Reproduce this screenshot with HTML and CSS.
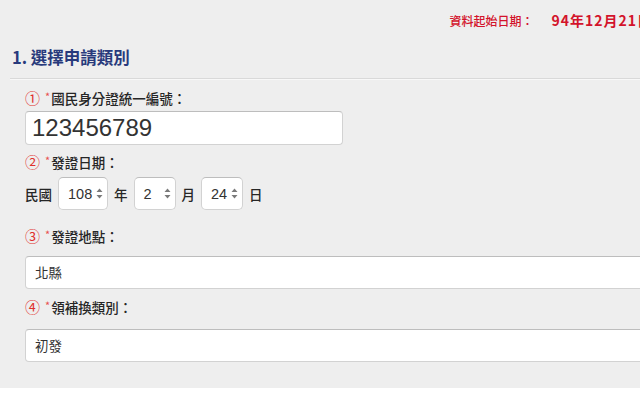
FILE: index.html
```html
<!DOCTYPE html>
<html lang="zh-Hant">
<head>
<meta charset="utf-8">
<title>選擇申請類別</title>
<link rel="stylesheet" href="styles.css">
</head>
<body>
<div class="page">
  <div class="topbar"><span class="since-label">資料起始日期：</span><span class="since-date">94年12月21日</span></div>
  <div class="section">
    <h2 class="section-title">1. 選擇申請類別</h2>
    <div class="fields">
      <div class="label label-first"><span class="num">①</span><span class="req">*</span>國民身分證統一編號：</div>
      <div class="textbox textbox-id">123456789</div>

      <div class="label label-date"><span class="num">②</span><span class="req">*</span>發證日期：</div>
      <div class="date-row">
        <span class="unit">民國</span>
        <div class="spin spin-year"><span class="spin-val">108</span><svg class="spin-arrow" width="7" height="11" viewBox="0 0 7 11"><path d="M3.5 0.5 L6.5 4 H0.5 Z M3.5 10.5 L6.5 7 H0.5 Z" fill="#7a7a7a"/></svg></div>
        <span class="unit">年</span>
        <div class="spin"><span class="spin-val">2</span><svg class="spin-arrow" width="7" height="11" viewBox="0 0 7 11"><path d="M3.5 0.5 L6.5 4 H0.5 Z M3.5 10.5 L6.5 7 H0.5 Z" fill="#7a7a7a"/></svg></div>
        <span class="unit">月</span>
        <div class="spin"><span class="spin-val">24</span><svg class="spin-arrow" width="7" height="11" viewBox="0 0 7 11"><path d="M3.5 0.5 L6.5 4 H0.5 Z M3.5 10.5 L6.5 7 H0.5 Z" fill="#7a7a7a"/></svg></div>
        <span class="unit">日</span>
      </div>

      <div class="label label-place"><span class="num">③</span><span class="req">*</span>發證地點：</div>
      <div class="selectbox selectbox-place">北縣</div>

      <div class="label label-type"><span class="num">④</span><span class="req">*</span>領補換類別：</div>
      <div class="selectbox selectbox-type">初發</div>
    </div>
  </div>
</div>
</body>
</html>
```
FILE: styles.css
```css
html, body {
  margin: 0;
  padding: 0;
  background: #ffffff;
  overflow: hidden;
}
body {
  font-family: "Noto Sans CJK TC", "Liberation Sans", sans-serif;
  color: #2a2a2a;
}
.page {
  width: 690px;
  background: #eeeeee;
  padding-bottom: 26px;
}
.topbar {
  height: 40px;
  line-height: 40px;
  text-align: right;
  padding-right: 38px;
  font-size: 12px;
  color: #d3132b;
  white-space: nowrap;
}
.since-label {
  font-weight: 500;
  margin-right: 18px;
}
.since-date {
  font-size: 14px;
  font-weight: 700;
  letter-spacing: 1px;
}
.section {
  margin-left: 10px;
}
.section-title {
  margin: 5px 0 0 0;
  padding: 0 0 9px 2px;
  font-size: 16.5px;
  line-height: 24px;
  font-weight: 700;
  color: #283a7c;
  border-bottom: 1px solid #d9d9d9;
  box-shadow: 0 1px 0 #f8f8f8;
}
.fields {
  padding-left: 15px;
  display: flex;
  flex-direction: column;
  align-items: flex-start;
}
.label {
  font-size: 13.5px;
  line-height: 20px;
  font-weight: 500;
  color: #262626;
  display: flex;
  align-items: center;
}
.num {
  color: #e0302c;
  font-size: 15px;
  font-weight: 400;
  width: 15px;
  margin-right: 5px;
}
.req {
  color: #e85050;
  font-size: 11px;
  line-height: 11px;
  font-weight: 400;
  align-self: flex-start;
  margin-top: 3px;
  margin-right: 1px;
}
.label-first { margin-top: 9px; }
.label-date { margin-top: 7px; }
.label-place { margin-top: 16px; }
.label-type { margin-top: 8px; }

.textbox,
.selectbox,
.spin {
  box-sizing: border-box;
  background: #ffffff;
  border: 1px solid #d2d2d2;
  border-top-color: #bdbdbd;
  border-radius: 4px;
}
.textbox-id {
  margin-top: 3px;
  width: 318px;
  height: 34px;
  line-height: 32px;
  padding-left: 6px;
  font-family: "Liberation Sans", sans-serif;
  font-size: 24px;
  color: #333333;
}
.date-row {
  margin-top: 5px;
  display: flex;
  align-items: center;
  gap: 6px;
  font-size: 13.5px;
  font-weight: 500;
}
.unit {
  color: #262626;
}
.spin {
  width: 42px;
  height: 33px;
  display: flex;
  align-items: center;
  justify-content: space-between;
  padding: 0 4px 0 9px;
  border-radius: 5px;
}
.spin-year {
  width: 50px;
}
.spin-val {
  font-family: "Liberation Sans", sans-serif;
  font-size: 14.5px;
  font-weight: 400;
  color: #333333;
}
.spin-arrow {
  display: block;
}
.selectbox {
  width: 660px;
  height: 33px;
  line-height: 31px;
  padding-left: 9px;
  font-size: 13.5px;
  color: #333333;
}
.selectbox-place { margin-top: 10px; }
.selectbox-type { margin-top: 12px; }
```
